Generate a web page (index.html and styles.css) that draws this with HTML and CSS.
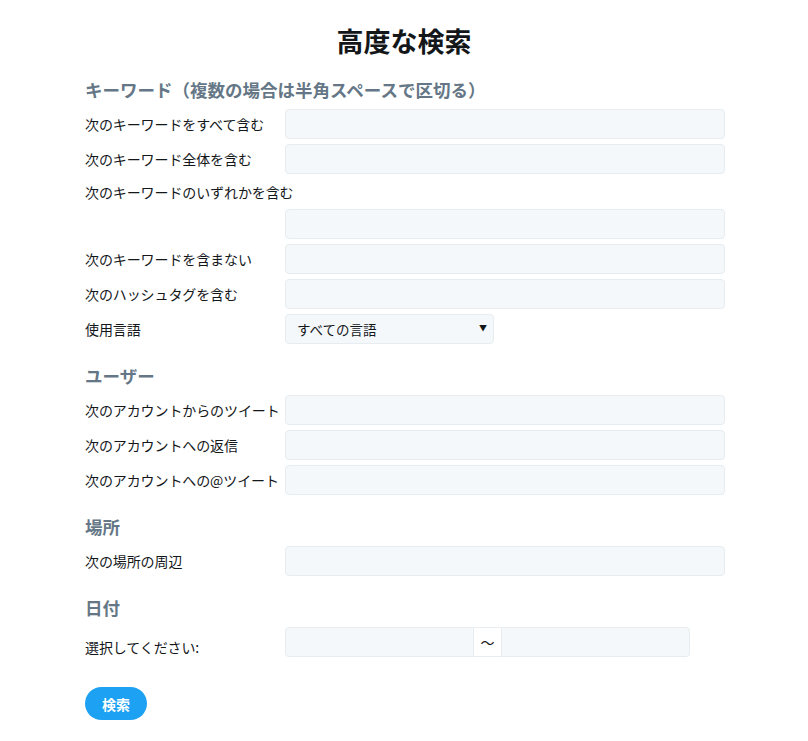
FILE: index.html
```
<!DOCTYPE html>
<html lang="ja">
<head>
<meta charset="utf-8">
<title>高度な検索</title>
<link rel="stylesheet" href="styles.css">
</head>
<body>
<main class="page">
  <h1 class="title">高度な検索</h1>

  <section class="group">
    <h2 class="group-title">キーワード（複数の場合は半角スペースで区切る）</h2>
    <div class="row"><label class="label">次のキーワードをすべて含む</label><input class="field" type="text"></div>
    <div class="row"><label class="label">次のキーワード全体を含む</label><input class="field" type="text"></div>
    <div class="row row-stacked"><label class="label label-wide">次のキーワードのいずれかを含む</label><input class="field field-indent" type="text"></div>
    <div class="row"><label class="label">次のキーワードを含まない</label><input class="field" type="text"></div>
    <div class="row"><label class="label">次のハッシュタグを含む</label><input class="field" type="text"></div>
    <div class="row"><label class="label">使用言語</label>
      <div class="select-wrap">
        <select class="select"><option>すべての言語</option></select>
        <span class="select-arrow">▼</span>
      </div>
    </div>
  </section>

  <section class="group">
    <h2 class="group-title">ユーザー</h2>
    <div class="row"><label class="label">次のアカウントからのツイート</label><input class="field" type="text"></div>
    <div class="row"><label class="label">次のアカウントへの返信</label><input class="field" type="text"></div>
    <div class="row"><label class="label">次のアカウントへの@ツイート</label><input class="field" type="text"></div>
  </section>

  <section class="group">
    <h2 class="group-title">場所</h2>
    <div class="row"><label class="label">次の場所の周辺</label><input class="field" type="text"></div>
  </section>

  <section class="group">
    <h2 class="group-title">日付</h2>
    <div class="row"><label class="label label-low">選択してください:</label>
      <div class="date-range">
        <input class="field date-field" type="text">
        <span class="date-sep">〜</span>
        <input class="field date-field" type="text">
      </div>
    </div>
  </section>

  <button class="btn" type="button">検索</button>
</main>
</body>
</html>
```

FILE: styles.css
```
* { box-sizing: border-box; }

html, body {
  margin: 0;
  padding: 0;
  background: #ffffff;
}

body {
  font-family: "Noto Sans CJK JP", "Noto Sans", sans-serif;
  color: #14171a;
  font-size: 14px;
}

.page {
  width: 808px;
  padding: 25px 0 0 85px;
}

.title {
  margin: 0 0 0 -85px;
  font-size: 27px;
  line-height: 32px;
  font-weight: 700;
  text-align: center;
}

.group {
  margin-top: 21px;
}

.group + .group {
  margin-top: 20px;
}

.group-title {
  margin: 0 0 7px;
  font-size: 17.5px;
  line-height: 24px;
  font-weight: 700;
  color: #657786;
}

.row {
  display: flex;
  align-items: center;
  margin-bottom: 5px;
}

.row:last-child {
  margin-bottom: 0;
}

.row-stacked {
  flex-wrap: wrap;
}

.label {
  width: 200px;
  flex: 0 0 200px;
  font-size: 14px;
  line-height: 30px;
  white-space: nowrap;
  letter-spacing: -0.1px;
}

.label-wide {
  flex: 0 0 100%;
  width: 100%;
  line-height: 26px;
  padding-bottom: 4px;
}

.label-low {
  padding-top: 10px;
  line-height: 20px;
}

.field {
  width: 440px;
  height: 30px;
  margin: 0;
  padding: 0 10px;
  border: 1px solid #e6ecf0;
  border-radius: 4px;
  background: #f5f8fa;
  font: inherit;
  outline: none;
}

.field-indent {
  margin-left: 200px;
}

.select-wrap {
  position: relative;
  width: 209px;
  height: 30px;
}

.select {
  appearance: none;
  -webkit-appearance: none;
  width: 100%;
  height: 30px;
  padding: 0 24px 0 11px;
  border: 1px solid #e6ecf0;
  border-radius: 4px;
  background: #f5f8fa;
  color: #14171a;
  font: inherit;
  font-size: 13.5px;
  line-height: 28px;
}

.select-arrow {
  position: absolute;
  right: 7px;
  top: 8px;
  font-size: 8px;
  line-height: 12px;
  color: #14171a;
  pointer-events: none;
}

.date-range {
  display: flex;
  width: 405px;
  height: 30px;
}

.date-field {
  width: 189px;
  flex: 0 0 189px;
}

.date-field:first-child {
  border-radius: 4px 0 0 4px;
}

.date-field:last-child {
  border-radius: 0 4px 4px 0;
}

.date-sep {
  flex: 0 0 27px;
  display: flex;
  align-items: center;
  justify-content: center;
  height: 30px;
  border-top: 1px solid #e6ecf0;
  border-bottom: 1px solid #e6ecf0;
  background: #ffffff;
  font-size: 14px;
  color: #14171a;
}

.btn {
  display: block;
  margin-top: 30px;
  width: 62px;
  height: 33px;
  padding: 0;
  border: none;
  border-radius: 100px;
  background: #1da1f2;
  color: #ffffff;
  font: inherit;
  font-size: 14px;
  font-weight: 700;
  cursor: pointer;
}
```
